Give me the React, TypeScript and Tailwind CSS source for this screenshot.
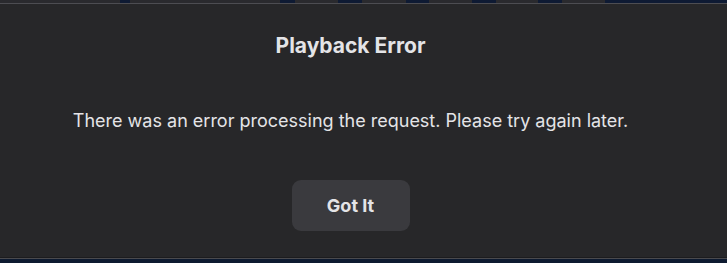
import React from "react";

export default function App() {
  const navy = [
    [120, 10],
    [280, 15],
    [338, 24],
    [406, 23],
    [472, 24],
    [538, 24],
  ];
  return (
    <div
      className="relative w-[727px] h-[263px] overflow-hidden bg-[#0d1a30] flex flex-col"
      style={{ fontFamily: "Inter, 'Noto Sans', sans-serif" }}
    >
      <div className="relative h-[3px] bg-[#2a2a2e] flex">
        {navy.map(([x, w], i) => (
          <div
            key={i}
            className="absolute top-0 h-[3px] bg-[#0e1a33]"
            style={{ left: x, width: w }}
          />
        ))}
        <div className="absolute top-0 left-[605px] right-0 h-[3px] bg-[#0e1a33]" />
      </div>
      <div className="h-px bg-[#4d4d52]" />
      <div className="h-[253px] bg-[#272729] flex">
        <div className="w-[701px] flex flex-col items-center pt-[28px]">
          <div className="text-[21px] leading-[28px] font-bold text-[#e4e4e7]">
            Playback Error
          </div>
          <div className="mt-[49px] text-[18px] leading-[24px] text-[#e4e4e7]">
            There was an error processing the request. Please try again later.
          </div>
          <button className="mt-[47px] w-[118px] h-[51px] rounded-[9px] bg-[#3a3a3e] text-[18px] font-bold text-[#e4e4e7]">
            Got It
          </button>
        </div>
      </div>
      <div className="h-px bg-[#1c1c1e]" />
      <div className="h-px bg-[#4a4a4e]" />
      <div className="flex-1 bg-[#0d1a30]" />
    </div>
  );
}
